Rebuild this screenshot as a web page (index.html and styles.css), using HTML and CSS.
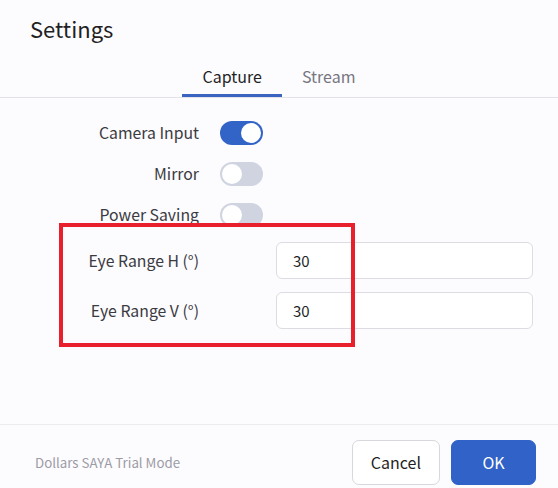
FILE: index.html
```html
<!DOCTYPE html>
<html lang="en">
<head>
  <meta charset="UTF-8">
  <title>Settings</title>
  <link rel="stylesheet" href="styles.css">
</head>
<body>
  <div class="dialog">
    <h2 class="title">Settings</h2>

    <div class="tabs">
      <div class="tab active">Capture</div>
      <div class="tab">Stream</div>
    </div>

    <div class="content">
      <div class="switch-row">
        <span class="label">Camera Input</span>
        <span class="switch on"><span class="knob"></span></span>
      </div>
      <div class="switch-row">
        <span class="label">Mirror</span>
        <span class="switch"><span class="knob"></span></span>
      </div>
      <div class="switch-row">
        <span class="label">Power Saving</span>
        <span class="switch"><span class="knob"></span></span>
      </div>

      <div class="field-group">
        <div class="field-row">
          <span class="label">Eye Range H (°)</span>
          <input class="field" type="text" value="30">
        </div>
        <div class="field-row">
          <span class="label">Eye Range V (°)</span>
          <input class="field" type="text" value="30">
        </div>
        <div class="highlight"></div>
      </div>
    </div>

    <div class="footer">
      <span class="mode">Dollars SAYA Trial Mode</span>
      <div class="actions">
        <button class="btn">Cancel</button>
        <button class="btn primary">OK</button>
      </div>
    </div>
  </div>
</body>
</html>
```

FILE: styles.css
```css
* {
  box-sizing: border-box;
}

body {
  margin: 0;
  background: #fcfbfe;
  color: #2b2b30;
  font-family: "Noto Sans CJK JP", "Noto Sans", sans-serif;
}

.dialog {
  width: 558px;
  height: 488px;
  display: flex;
  flex-direction: column;
}

.title {
  margin: 0;
  padding: 12px 30px 0;
  font-size: 22px;
  font-weight: 400;
  line-height: 32px;
  color: #1f1f24;
}

/* tabs */
.tabs {
  display: flex;
  justify-content: center;
  margin-top: 20px;
  border-bottom: 1px solid #e2e2ea;
}

.tab {
  padding: 0 20px 6px;
  font-size: 16px;
  line-height: 24px;
  color: #77767f;
  border-bottom: 3px solid transparent;
}

.tab.active {
  color: #1f1f24;
  border-bottom-color: #3a64bf;
}

/* form */
.content {
  flex: 1;
  padding-top: 14px;
}

.label {
  font-size: 15.8px;
  color: #3a3a40;
}

.switch-row {
  display: grid;
  grid-template-columns: 199px 44px;
  column-gap: 21px;
  align-items: center;
  height: 41px;
}

.switch-row .label {
  text-align: right;
}

.switch {
  position: relative;
  width: 43px;
  height: 24px;
  border-radius: 12px;
  background: #cfd4e0;
}

.switch .knob {
  position: absolute;
  top: 2px;
  left: 2px;
  width: 20px;
  height: 20px;
  border-radius: 50%;
  background: #fff;
}

.switch.on {
  background: #3264c8;
}

.switch.on .knob {
  left: 21px;
}

.field-group {
  position: relative;
}

.field-row {
  display: grid;
  grid-template-columns: 199px 257px;
  column-gap: 77px;
  align-items: center;
  height: 50px;
}

.field-row .label {
  text-align: right;
}

.field {
  height: 37px;
  padding: 0 16px;
  border: 1px solid #dcdce2;
  border-radius: 6px;
  background: #fff;
  font-family: inherit;
  font-size: 15px;
  color: #1f1f24;
  outline: none;
}

.highlight {
  position: absolute;
  left: 59px;
  top: -12px;
  width: 296px;
  height: 124px;
  border: 4px solid #e8202b;
  pointer-events: none;
}

/* footer */
.footer {
  display: flex;
  justify-content: space-between;
  align-items: center;
  height: 64px;
  padding: 11px 22px 0 35px;
  border-top: 1px solid #ececf0;
}

.mode {
  font-size: 13.3px;
  color: #9d9ca6;
}

.actions {
  display: flex;
  gap: 11px;
}

.btn {
  height: 45px;
  padding: 0 18px;
  border: 1px solid #d7d7de;
  border-radius: 7px;
  background: #fff;
  font-family: inherit;
  font-size: 16px;
  color: #1f1f24;
}

.btn.primary {
  width: 85px;
  border-color: #3062c8;
  background: #3062c8;
  color: #fff;
}
```
